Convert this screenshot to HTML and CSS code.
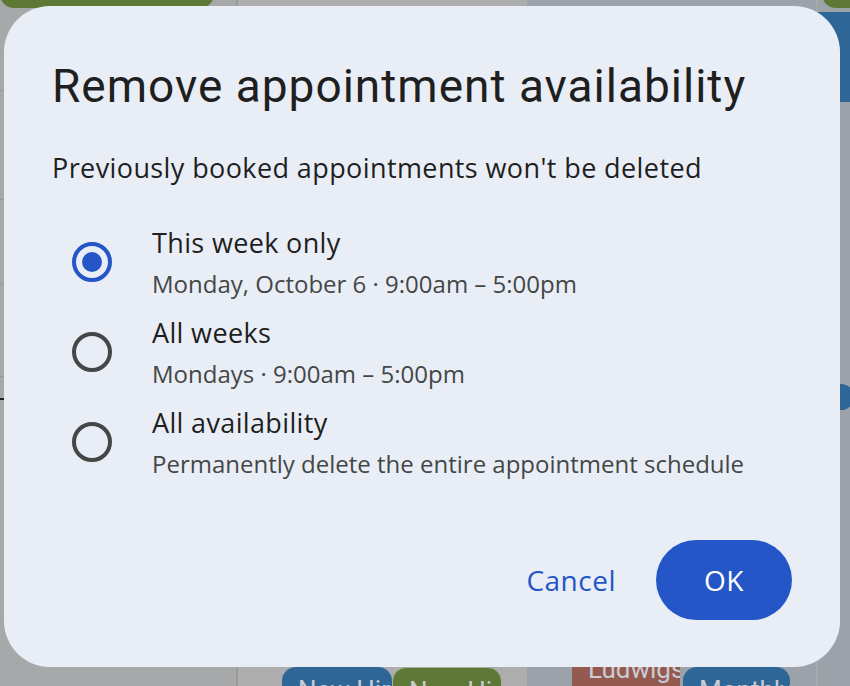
FILE: index.html
```html
<!DOCTYPE html>
<html lang="en">
<head>
<meta charset="utf-8">
<title>Remove appointment availability</title>
<link rel="stylesheet" href="styles.css">
</head>
<body>
<div class="backdrop">
  <div class="col col-a">
    <div class="ev ev-green-top"></div>
    <div class="hline" style="top:90px"></div>
    <div class="hline" style="top:199px"></div>
    <div class="hline" style="top:283px"></div>
    <div class="hline" style="top:376px"></div>
    <div class="tick"></div>
  </div>
  <div class="col col-b">
    <div class="ev ev-blue-b">New Hir</div>
    <div class="ev ev-green-b">New Hir</div>
  </div>
  <div class="col col-c">
    <div class="ev ev-red">Ludwigs</div>
    <div class="ev ev-blue-c">Monthly</div>
  </div>
  <div class="col col-d">
    <div class="ev ev-green-d"></div>
    <div class="ev ev-blue-d"></div>
    <div class="fab-dot"></div>
  </div>
</div>

<div class="dialog" role="dialog">
  <h1 class="title">Remove appointment availability</h1>
  <p class="support">Previously booked appointments won't be deleted</p>
  <div class="options">
    <label class="option">
      <span class="radio checked"><span class="dot"></span></span>
      <span class="texts">
        <span class="primary">This week only</span>
        <span class="secondary">Monday, October 6 · 9:00am – 5:00pm</span>
      </span>
    </label>
    <label class="option">
      <span class="radio"></span>
      <span class="texts">
        <span class="primary">All weeks</span>
        <span class="secondary">Mondays · 9:00am – 5:00pm</span>
      </span>
    </label>
    <label class="option">
      <span class="radio"></span>
      <span class="texts">
        <span class="primary">All availability</span>
        <span class="secondary">Permanently delete the entire appointment schedule</span>
      </span>
    </label>
  </div>
  <div class="actions">
    <button class="btn text-btn">Cancel</button>
    <button class="btn filled-btn">OK</button>
  </div>
</div>
</body>
</html>
```

FILE: styles.css
```css
* { box-sizing: border-box; }
html, body {
  margin: 0;
  padding: 0;
  width: 850px;
  height: 686px;
  overflow: hidden;
}
body {
  position: relative;
  font-family: "Open Sans", Roboto, Arial, sans-serif;
  background: #a8a8a8;
}

/* ---------- backdrop calendar under scrim ---------- */
.backdrop {
  display: flex;
  width: 850px;
  height: 686px;
}
.col {
  position: relative;
  height: 100%;
  overflow: hidden;
}
.col-a { width: 238px; background: #a7a8aa; border-right: 2px solid #9a9a9a; }
.col-b { width: 289px; background: #adadad; }
.col-c { width: 289px; background: #9ca2aa; }
.col-d { flex: 1; background: #9ca2aa; border-left: 2px solid #a9a9a9; }

.hline {
  position: absolute;
  left: 0;
  right: 0;
  height: 1px;
  background: #999a9c;
}
.tick {
  position: absolute;
  left: 0;
  top: 398px;
  width: 4px;
  height: 2px;
  background: #222;
}

.ev {
  position: absolute;
  border-radius: 14px;
  color: #c9ccd2;
  font-family: Roboto, Arial, sans-serif;
  font-size: 26px;
  line-height: 1;
  padding: 10px 16px;
  overflow: hidden;
  white-space: nowrap;
}
.ev-green-top { left: 0; top: -30px; width: 214px; height: 38px; background: #5e7836; }
.ev-blue-b { left: 44px; top: 667px; width: 110px; height: 60px; background: #2f6698; }
.ev-green-b { left: 154px; top: 667px; width: 110px; height: 60px; background: #5e7836; border: 1px solid #a9b19c; }
.ev-red { left: 45px; top: 630px; width: 108px; height: 70px; background: #945a50; border-radius: 0; padding-top: 26px; }
.ev-blue-c { left: 156px; top: 667px; width: 107px; height: 60px; background: #2f6698; }
.ev-green-d { left: 4px; top: -30px; width: 60px; height: 38px; background: #5e7836; }
.ev-blue-d { left: 0; top: 12px; width: 60px; height: 90px; background: #2f6698; border-radius: 0; }
.fab-dot {
  position: absolute;
  left: 10px;
  top: 384px;
  width: 26px;
  height: 26px;
  border-radius: 50%;
  background: #2f6698;
}

/* ---------- dialog ---------- */
.dialog {
  position: absolute;
  left: 4px;
  top: 6px;
  width: 836px;
  height: 661px;
  background: #e9eef6;
  border-radius: 46px;
  padding: 52px 48px 0 48px;
  display: flex;
  flex-direction: column;
}
.title {
  margin: 0;
  font-family: Roboto, "Open Sans", Arial, sans-serif;
  font-weight: 400;
  font-size: 46px;
  line-height: 56px;
  color: #1f1f1f;
  letter-spacing: 1px;
}
.support {
  margin: 36px 0 0 0;
  font-size: 27px;
  line-height: 36px;
  letter-spacing: 0.4px;
  color: #1f1f1f;
}
.options {
  margin-top: 38px;
  display: flex;
  flex-direction: column;
  gap: 8px;
}
.option {
  display: flex;
  align-items: flex-start;
  gap: 40px;
}
.radio {
  flex: none;
  width: 40px;
  height: 40px;
  margin: 18px 0 0 20px;
  border: 4px solid #444746;
  border-radius: 50%;
  display: flex;
  align-items: center;
  justify-content: center;
}
.radio.checked { border-color: #2556c8; }
.dot {
  width: 20px;
  height: 20px;
  border-radius: 50%;
  background: #2556c8;
}
.texts {
  display: flex;
  flex-direction: column;
}
.primary {
  font-size: 27px;
  line-height: 38px;
  letter-spacing: 0.35px;
  color: #1f1f1f;
}
.secondary {
  font-size: 24px;
  line-height: 44px;
  letter-spacing: 0;
  margin-top: 0;
  color: #444746;
}
.actions {
  margin-top: 54px;
  display: flex;
  justify-content: flex-end;
  gap: 16px;
}
.btn {
  font-family: "Open Sans", Roboto, Arial, sans-serif;
  font-size: 28px;
  font-weight: 500;
  letter-spacing: 0.5px;
  height: 80px;
  border: none;
  border-radius: 40px;
  padding: 0 24px;
  cursor: pointer;
}
.text-btn {
  background: transparent;
  color: #2556c8;
}
.filled-btn {
  background: #2556c8;
  color: #ffffff;
  width: 136px;
}
```
